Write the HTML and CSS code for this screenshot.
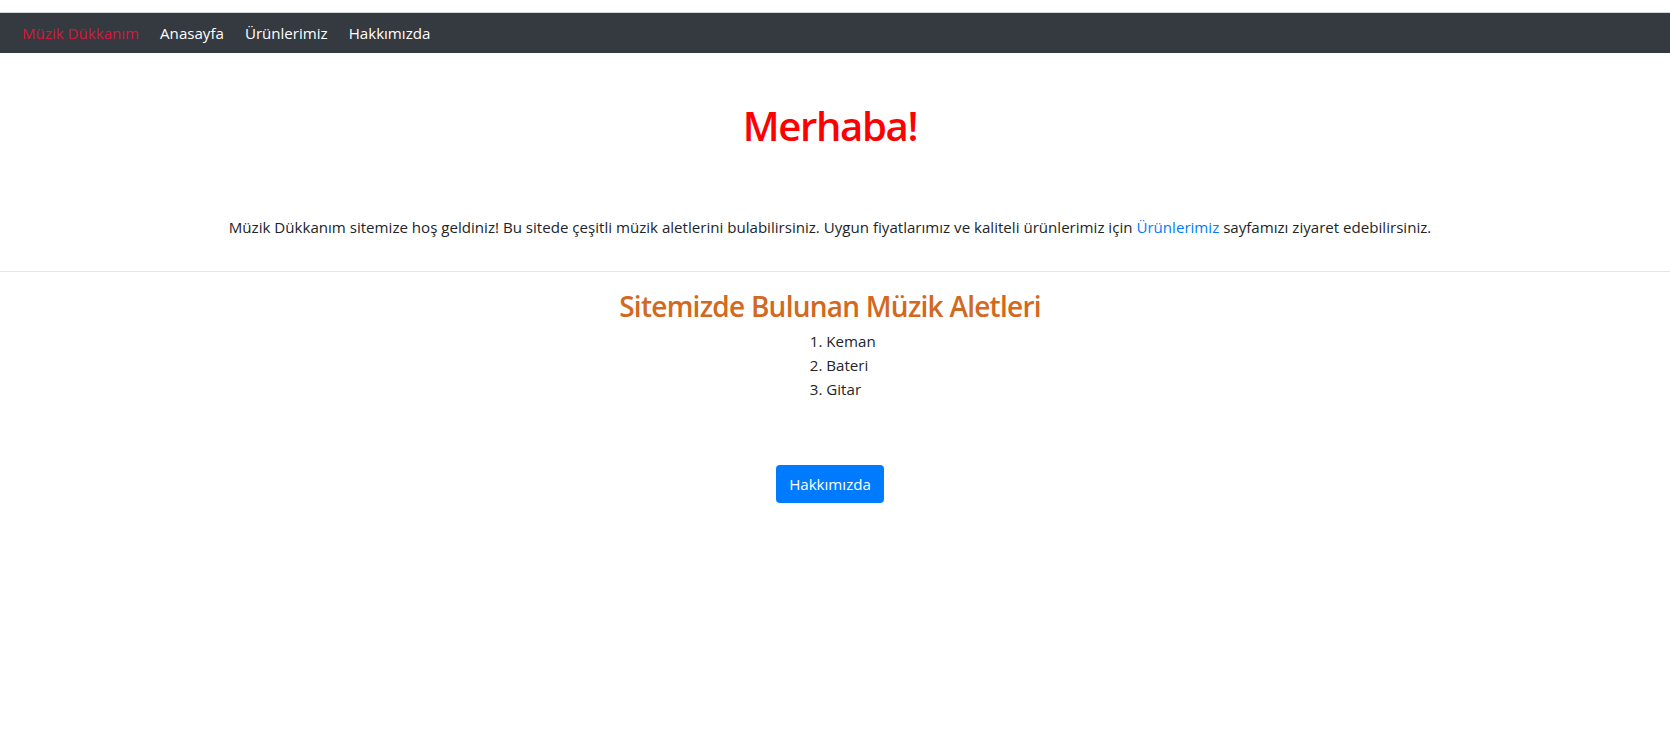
FILE: index.html
```html
<!DOCTYPE html>
<html lang="tr">
<head>
<meta charset="utf-8">
<title>Müzik Dükkanım</title>
<link rel="stylesheet" href="styles.css">
</head>
<body>
<div class="chrome"></div>
<nav class="navbar">
  <a class="brand" href="#">Müzik Dükkanım</a>
  <a class="nav-link" href="#">Anasayfa</a>
  <a class="nav-link" href="#">Ürünlerimiz</a>
  <a class="nav-link" href="#">Hakkımızda</a>
</nav>
<main class="content">
  <h1 class="title">Merhaba!</h1>
  <p class="intro">Müzik Dükkanım sitemize hoş geldiniz! Bu sitede çeşitli müzik aletlerini bulabilirsiniz. Uygun fiyatlarımız ve kaliteli ürünlerimiz için <a class="link" href="#">Ürünlerimiz</a> sayfamızı ziyaret edebilirsiniz.</p>
  <hr class="divider">
  <h3 class="subtitle">Sitemizde Bulunan Müzik Aletleri</h3>
  <ol class="list">
    <li>Keman</li>
    <li>Bateri</li>
    <li>Gitar</li>
  </ol>
  <div class="actions">
    <a class="btn" href="#">Hakkımızda</a>
  </div>
</main>
</body>
</html>
```

FILE: styles.css
```css
* { box-sizing: border-box; }
html, body { margin: 0; padding: 0; background: #fff; }
body {
  font-family: "Open Sans", "Noto Sans", sans-serif;
  font-size: 15.1px;
  line-height: 24px;
  color: #212529;
}
.chrome {
  height: 13px;
  border-bottom: 1px solid #d4d4d4;
}
.navbar {
  height: 40px;
  background: #343a40;
  display: flex;
  align-items: center;
  gap: 21px;
  padding: 0 22px;
  font-size: 15.1px;
}
.navbar a { text-decoration: none; }
.brand { color: #dc143c; }
.nav-link { color: #fff; }
.content {
  text-align: center;
  padding-right: 10px;
}
.title {
  margin: 49px 0 0;
  font-size: 40px;
  font-weight: 600;
  letter-spacing: -1.3px;
  line-height: 48px;
  color: #ff0000;
}
.intro { margin: 65px 0 0; }
.link { color: #007bff; text-decoration: none; }
.divider {
  margin: 32px -10px 17px 0;
  border: 0;
  border-top: 1px solid rgba(0,0,0,.1);
}
.subtitle {
  margin: 0 0 6px;
  font-size: 28px;
  font-weight: 600;
  letter-spacing: -0.75px;
  line-height: 34px;
  color: #d2691e;
}
.list {
  display: inline-block;
  margin: 0 0 16px;
  padding-left: 42px;
  text-align: left;
}
.actions { margin-top: 48px; }
.btn {
  display: inline-block;
  padding: 7px 13px;
  line-height: 24px;
  color: #fff;
  background: #007bff;
  border-radius: 4px;
  text-decoration: none;
}
```
